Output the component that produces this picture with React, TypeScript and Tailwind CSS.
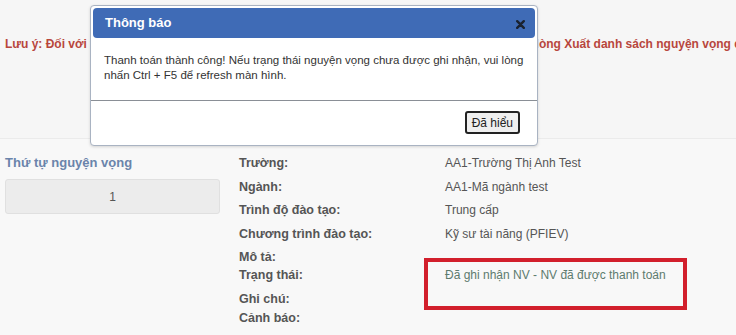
import React from 'react';

const rows = [
  { label: 'Trường:', value: 'AA1-Trường Thị Anh Test', h: 'h-[24px]' },
  { label: 'Ngành:', value: 'AA1-Mã ngành test', h: 'h-[23px]' },
  { label: 'Trình độ đào tạo:', value: 'Trung cấp', h: 'h-[24px]' },
  { label: 'Chương trình đào tạo:', value: 'Kỹ sư tài năng (PFIEV)', h: 'h-[23px]' },
  { label: 'Mô tả:', value: '', h: 'h-[18px]' },
  { label: 'Trạng thái:', value: 'Đã ghi nhận NV - NV đã được thanh toán', h: 'h-[24px]', status: true },
  { label: 'Ghi chú:', value: '', h: 'h-[19px]' },
  { label: 'Cảnh báo:', value: '', h: 'h-[20px]' },
];

const App = () => {
  return (
    <div className="relative w-[736px] h-[335px] overflow-hidden bg-[#f8f8f8] font-['Liberation_Sans',Arial,sans-serif]">
      {/* note bar */}
      <div className="h-[139px] border-b border-[#ebebeb] bg-[#f6f6f6] pt-[35px] pl-[5px]">
        <p className="whitespace-nowrap text-[12px] font-bold text-[#b8463d]">
          Lưu ý: Đối với thí sinh đã đăng ký nguyện vọng và đã hoàn tất thanh toán thành công thì vui lòng Xuất danh sách nguyện vọng để kiểm tra
        </p>
      </div>

      {/* detail section */}
      <div className="flex pt-[15px]">
        <div className="w-[215px] ml-[5px]">
          <div className="text-[13px] font-bold text-[#6a84ab] leading-[18px]">Thứ tự nguyện vọng</div>
          <div className="mt-[7px] h-[35px] rounded-[3px] border border-[#e0e0e0] bg-[#ececec] flex items-center justify-center text-[12px] text-[#555]">
            1
          </div>
        </div>
        <div className="ml-[19px] flex flex-col">
          {rows.map((r, i) => (
            <div key={i} className={`flex ${r.h} leading-[18px]`}>
              <div className="w-[206px] text-[12.5px] font-bold text-[#555]">{r.label}</div>
              <div className={`text-[12px] ${r.status ? 'text-[#5d7b6e]' : 'text-[#555]'}`}>{r.value}</div>
            </div>
          ))}
        </div>
      </div>

      {/* annotation */}
      <div className="absolute left-[424px] top-[258px] w-[263px] h-[52px] border-[4px] border-[#d21f2c]" />

      {/* modal */}
      <div className="absolute left-[90px] top-[5px] w-[448px] h-[141px] rounded-[4px] border border-[#a9b3c2] bg-white shadow-[0_1px_3px_rgba(0,0,0,0.15)] flex flex-col">
        <div className="mx-[2px] mt-[2px] h-[30px] rounded-[4px] bg-[#3f6bb6] flex items-center justify-between px-[12px]">
          <span className="text-[13px] font-bold text-white">Thông báo</span>
          <svg width="9" height="9" viewBox="0 0 9 9" className="-mr-[2px] mt-[2px]">
            <path d="M1.2 1.2 L7.8 7.8 M7.8 1.2 L1.2 7.8" stroke="#1a2230" strokeWidth="2.4" strokeLinecap="round" />
          </svg>
        </div>
        <div className="px-[13px] pt-[15px] h-[62px] text-[11.5px] leading-[15px] text-[#333]">
          Thanh toán thành công! Nếu trạng thái nguyện vọng chưa được ghi nhận, vui lòng nhấn Ctrl + F5 để refresh màn hình.
        </div>
        <div className="border-t border-[#8a8f96]" />
        <div className="flex justify-end pr-[17px] pt-[10px]">
          <button className="h-[23px] px-[5px] rounded-[3px] border-2 border-[#222] bg-[#efefef] text-[12px] text-[#222] leading-none">
            Đã hiểu
          </button>
        </div>
      </div>
    </div>
  );
};

export default App;
